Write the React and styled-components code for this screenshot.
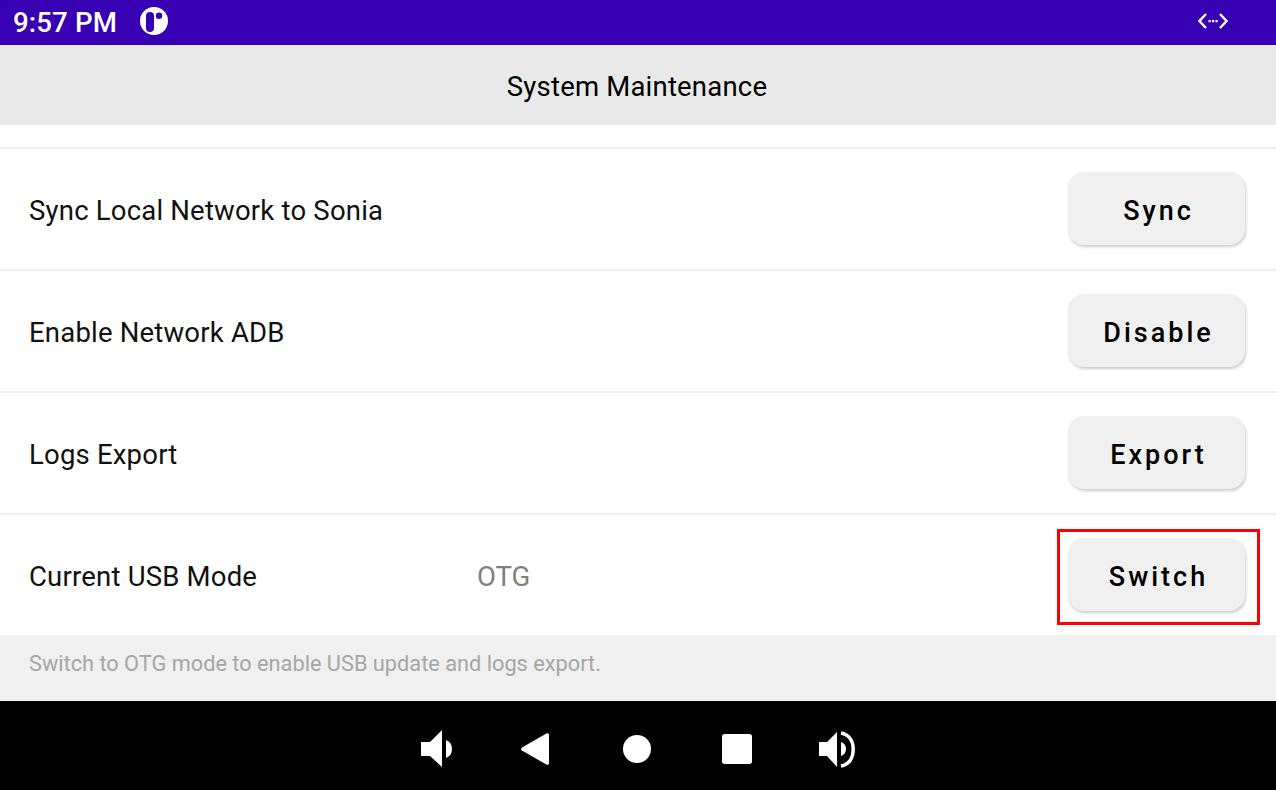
import React from 'react';
import styled, { createGlobalStyle } from 'styled-components';

const GlobalStyle = createGlobalStyle`
  html, body {
    margin: 0;
    padding: 0;
    background: #fff;
    font-family: Roboto, "Liberation Sans", sans-serif;
  }
  * {
    box-sizing: border-box;
  }
`;

const Screen = styled.div`
  width: 1276px;
  height: 790px;
  display: flex;
  flex-direction: column;
  overflow: hidden;
`;

const StatusBar = styled.div`
  height: 45px;
  flex: none;
  display: flex;
  align-items: center;
  padding: 0 48px 3px 13px;
  background: #3700b3;
  color: #fff;
`;

const Clock = styled.span`
  padding-top: 3px;
  font-size: 27.7px;
  font-weight: 500;
  line-height: 32px;
  letter-spacing: 0.1px;
`;

const AppBadge = styled.svg`
  width: 28px;
  height: 28px;
  margin-left: 23px;
`;

const NetworkIcon = styled.svg`
  width: 30px;
  height: 16px;
  margin-left: auto;
`;

const Header = styled.header`
  height: 80px;
  flex: none;
  display: flex;
  align-items: center;
  justify-content: center;
  padding: 3px 2px 0 0;
  background: #e9e9e9;
  color: #000;
  font-size: 27.5px;
  letter-spacing: 0.2px;
`;

const List = styled.div`
  flex: none;
  height: 510px;
  padding-top: 22px;
  background: #fff;
`;

const Row = styled.div`
  height: 122px;
  display: flex;
  align-items: center;
  padding: 0 31px 0 29px;
  border-top: 2px solid #f0f0f0;
`;

const RowLabel = styled.span`
  width: 448px;
  flex: none;
  padding-top: 3px;
  font-size: 27.5px;
  color: #111;
  letter-spacing: 0.2px;
`;

const RowValue = styled.span`
  padding-top: 3px;
  font-size: 27.5px;
  color: #808080;
`;

const ButtonWrap = styled.div`
  position: relative;
  margin: 0 0 1px auto;
`;

const ActionButton = styled.button`
  display: block;
  width: 177px;
  height: 73px;
  padding: 5px 0 0 4px;
  border: 0;
  border-radius: 16px;
  background: #f0f0f0;
  box-shadow: 1px 2px 3px rgba(0, 0, 0, 0.2);
  color: #000;
  font-family: inherit;
  font-size: 27px;
  font-weight: 500;
  letter-spacing: 3px;
`;

const Highlight = styled.div`
  position: absolute;
  top: -9px;
  left: -11px;
  width: 203px;
  height: 96px;
  border: 3px solid #f00;
  pointer-events: none;
`;

const Hint = styled.div`
  height: 66px;
  flex: none;
  padding: 16px 29px 0;
  background: #f0f0f0;
  color: #a6a6a6;
  font-size: 21.75px;
  line-height: 26px;
`;

const NavBar = styled.nav`
  flex: 1;
  display: flex;
  align-items: center;
  justify-content: center;
  gap: 40px;
  padding: 7px 2px 0 0;
  background: #000;
`;

const NavIcon = styled.svg`
  width: 60px;
  height: 60px;
  fill: #fff;
`;

const rows = [
  { label: 'Sync Local Network to Sonia', action: 'Sync' },
  { label: 'Enable Network ADB', action: 'Disable' },
  { label: 'Logs Export', action: 'Export' },
  { label: 'Current USB Mode', value: 'OTG', action: 'Switch', highlighted: true },
];

const App = () => {
  return (
    <Screen>
      <GlobalStyle />
      <StatusBar>
        <Clock>9:57 PM</Clock>
        <AppBadge viewBox="0 0 28 28">
          <path
            fill="#fff"
            fillRule="evenodd"
            d="M14 0a14 14 0 1 1 0 28a14 14 0 0 1 0-28zM10 5a4 4 0 0 0-4 4v12a4 4 0 0 0 8 0V9a4 4 0 0 0-4-4zM19 5.500a3.200 3.200 0 1 0 0 6.400a3.200 3.200 0 0 0 0-6.400z"
          />
        </AppBadge>
        <NetworkIcon viewBox="0 0 30 16">
          <path d="M8 1L1.500 8L8 15M22 1L28.500 8L22 15" fill="none" stroke="#fff" strokeWidth="2.400" />
          <path d="M10.500 7h2.200v2.200h-2.200zM14 7h2.200v2.200H14zM17.500 7h2.200v2.200h-2.200z" fill="#fff" />
        </NetworkIcon>
      </StatusBar>
      <Header>System Maintenance</Header>
      <List>
        {rows.map((row) => (
          <Row key={row.label}>
            <RowLabel>{row.label}</RowLabel>
            {row.value && <RowValue>{row.value}</RowValue>}
            <ButtonWrap>
              <ActionButton>{row.action}</ActionButton>
              {row.highlighted && <Highlight />}
            </ButtonWrap>
          </Row>
        ))}
      </List>
      <Hint>Switch to OTG mode to enable USB update and logs export.</Hint>
      <NavBar>
        <NavIcon viewBox="0 0 60 60">
          <path d="M14 23h9L35 11v37L23 37h-9z" />
          <path d="M39 21c4 1.500 6 4.500 6 9s-2 7.500-6 9z" />
        </NavIcon>
        <NavIcon viewBox="0 0 60 60">
          <path d="M42 16v28c0 1.500-1.300 2.300-2.600 1.600L15 31.500c-1.300-.8-1.300-2.200 0-3L39.400 14.400C40.700 13.700 42 14.500 42 16z" />
        </NavIcon>
        <NavIcon viewBox="0 0 60 60">
          <circle cx="30" cy="30" r="14" />
        </NavIcon>
        <NavIcon viewBox="0 0 60 60">
          <rect x="15" y="15" width="30" height="30" rx="2.500" />
        </NavIcon>
        <NavIcon viewBox="0 0 60 60">
          <path d="M12 23h8L30 13v35L20 37h-8z" />
          <path d="M34 23c3 1 5 3.500 5 7s-2 6-5 7z" />
          <path d="M34 14C42 15.500 46.200 22 46.200 30.500S42 45.500 34 47" fill="none" stroke="#fff" strokeWidth="3.500" />
        </NavIcon>
      </NavBar>
    </Screen>
  );
};

export default App;
